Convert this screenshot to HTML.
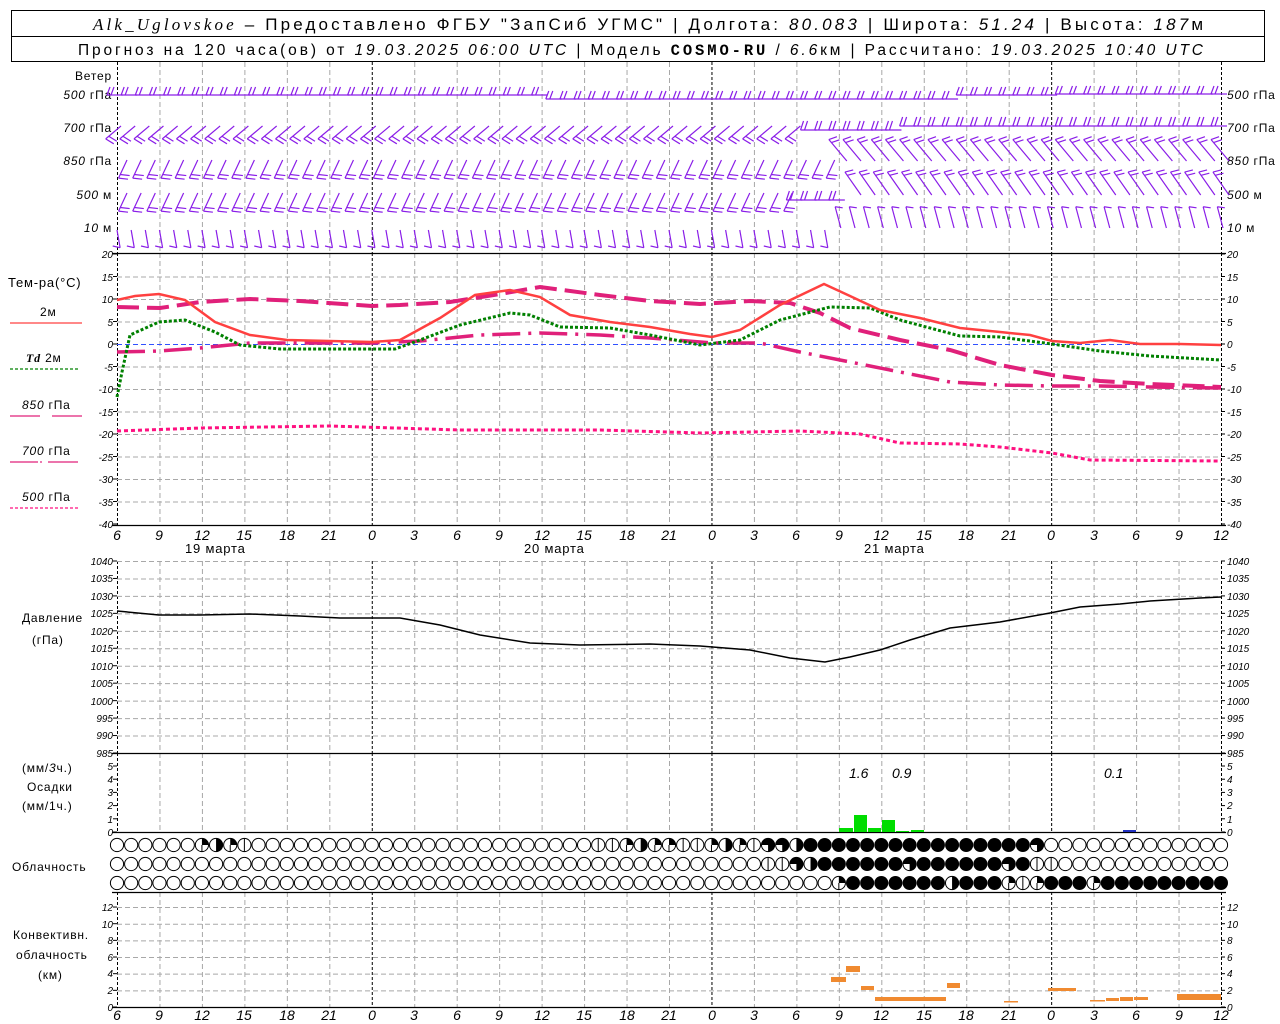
<!DOCTYPE html>
<html><head><meta charset="utf-8"><style>
html,body{margin:0;padding:0;background:#fff;width:1280px;height:1024px;overflow:hidden}
svg{display:block}
text{font-family:"Liberation Sans","DejaVu Sans",sans-serif;fill:#000}
.hd{font-size:17px}
.h2{font-size:15.5px}
.lb{font-size:12px;letter-spacing:0.8px}
.ax{font-size:10px;font-style:italic}
.bx{font-size:14px;font-style:italic}
</style></head><body>
<svg id="s" width="1280" height="1024" viewBox="0 0 1280 1024" xmlns="http://www.w3.org/2000/svg">
<rect x="11.5" y="10.5" width="1253" height="51" fill="none" stroke="#000"/>
<line x1="11" y1="36.5" x2="1265" y2="36.5" stroke="#000"/>
<text class="hd" x="93" y="30" textLength="1110" lengthAdjust="spacing"><tspan font-style="italic" font-family="Liberation Serif">Alk_Uglovskoe</tspan> – Предоставлено ФГБУ "ЗапСиб УГМС" | Долгота: <tspan font-style="italic">80.083</tspan> | Широта: <tspan font-style="italic">51.24</tspan> | Высота: <tspan font-style="italic">187</tspan>м</text>
<text class="h2" x="78" y="55" textLength="1125" lengthAdjust="spacing">Прогноз на 120 часа(ов) от <tspan font-style="italic">19.03.2025 06:00 UTC</tspan> | Модель <tspan font-weight="bold" font-family="Liberation Mono">COSMO-RU</tspan> / <tspan font-style="italic">6.6</tspan>км | Рассчитано: <tspan font-style="italic">19.03.2025 10:40 UTC</tspan></text>

<g class="lb">
<text x="112" y="80" text-anchor="end">Ветер</text>
<text x="112" y="99" text-anchor="end"><tspan font-style="italic">500</tspan> гПа</text>
<text x="112" y="132" text-anchor="end"><tspan font-style="italic">700</tspan> гПа</text>
<text x="112" y="165" text-anchor="end"><tspan font-style="italic">850</tspan> гПа</text>
<text x="112" y="199" text-anchor="end"><tspan font-style="italic">500</tspan> м</text>
<text x="112" y="232" text-anchor="end"><tspan font-style="italic">10</tspan>   м</text>
<text x="1227" y="99"><tspan font-style="italic">500</tspan> гПа</text>
<text x="1227" y="132"><tspan font-style="italic">700</tspan> гПа</text>
<text x="1227" y="165"><tspan font-style="italic">850</tspan> гПа</text>
<text x="1227" y="199"><tspan font-style="italic">500</tspan> м</text>
<text x="1227" y="232"><tspan font-style="italic">10</tspan>   м</text>
<text x="8" y="287" font-size="13">Тем-ра(°C)</text>
<text x="40" y="316">2м</text>
<text x="26" y="362"><tspan font-style="italic" font-weight="bold" font-family="Liberation Serif">Td</tspan>  2м</text>
<text x="22" y="409"><tspan font-style="italic">850</tspan> гПа</text>
<text x="22" y="455"><tspan font-style="italic">700</tspan> гПа</text>
<text x="22" y="501"><tspan font-style="italic">500</tspan> гПа</text>
<text x="22" y="622">Давление</text>
<text x="32" y="644">(гПа)</text>
<text x="22" y="772">(мм/<tspan font-style="italic">3</tspan>ч.)</text>
<text x="27" y="791">Осадки</text>
<text x="22" y="810">(мм/1ч.)</text>
<text x="12" y="871">Облачность</text>
<text x="13" y="939">Конвективн.</text>
<text x="16" y="959">облачность</text>
<text x="38" y="979">(км)</text>
<text x="185" y="553" font-size="13">19 марта</text>
<text x="524" y="553" font-size="13">20 марта</text>
<text x="864" y="553" font-size="13">21 марта</text>
</g>
<g class="bx">
<text x="849" y="778">1.6</text><text x="892" y="778">0.9</text><text x="1104" y="778">0.1</text>
</g>
<g id="g"></g>
<g class="ax" id="labels">
<text x="113" y="258" text-anchor="end">20</text><text x="113" y="281" text-anchor="end">15</text><text x="113" y="303" text-anchor="end">10</text><text x="113" y="326" text-anchor="end">5</text><text x="113" y="348" text-anchor="end">0</text><text x="113" y="371" text-anchor="end">-5</text><text x="113" y="393" text-anchor="end">-10</text><text x="113" y="416" text-anchor="end">-15</text><text x="113" y="438" text-anchor="end">-20</text><text x="113" y="461" text-anchor="end">-25</text><text x="113" y="483" text-anchor="end">-30</text><text x="113" y="506" text-anchor="end">-35</text><text x="113" y="528" text-anchor="end">-40</text>
<text x="1227" y="258">20</text><text x="1227" y="281">15</text><text x="1227" y="303">10</text><text x="1227" y="326">5</text><text x="1227" y="348">0</text><text x="1227" y="371">-5</text><text x="1227" y="393">-10</text><text x="1227" y="416">-15</text><text x="1227" y="438">-20</text><text x="1227" y="461">-25</text><text x="1227" y="483">-30</text><text x="1227" y="506">-35</text><text x="1227" y="528">-40</text>
<text x="113" y="565" text-anchor="end">1040</text><text x="113" y="582" text-anchor="end">1035</text><text x="113" y="600" text-anchor="end">1030</text><text x="113" y="617" text-anchor="end">1025</text><text x="113" y="635" text-anchor="end">1020</text><text x="113" y="652" text-anchor="end">1015</text><text x="113" y="670" text-anchor="end">1010</text><text x="113" y="687" text-anchor="end">1005</text><text x="113" y="705" text-anchor="end">1000</text><text x="113" y="722" text-anchor="end">995</text><text x="113" y="739" text-anchor="end">990</text><text x="113" y="757" text-anchor="end">985</text>
<text x="1227" y="565">1040</text><text x="1227" y="582">1035</text><text x="1227" y="600">1030</text><text x="1227" y="617">1025</text><text x="1227" y="635">1020</text><text x="1227" y="652">1015</text><text x="1227" y="670">1010</text><text x="1227" y="687">1005</text><text x="1227" y="705">1000</text><text x="1227" y="722">995</text><text x="1227" y="739">990</text><text x="1227" y="757">985</text>
<text x="113" y="770" text-anchor="end">5</text><text x="113" y="783" text-anchor="end">4</text><text x="113" y="796" text-anchor="end">3</text><text x="113" y="809" text-anchor="end">2</text><text x="113" y="823" text-anchor="end">1</text><text x="113" y="836" text-anchor="end">0</text>
<text x="1227" y="770">5</text><text x="1227" y="783">4</text><text x="1227" y="796">3</text><text x="1227" y="809">2</text><text x="1227" y="823">1</text><text x="1227" y="836">0</text>
<text x="113" y="911" text-anchor="end">12</text><text x="113" y="928" text-anchor="end">10</text><text x="113" y="944" text-anchor="end">8</text><text x="113" y="961" text-anchor="end">6</text><text x="113" y="977" text-anchor="end">4</text><text x="113" y="994" text-anchor="end">2</text><text x="113" y="1011" text-anchor="end">0</text>
<text x="1227" y="911">12</text><text x="1227" y="928">10</text><text x="1227" y="944">8</text><text x="1227" y="961">6</text><text x="1227" y="977">4</text><text x="1227" y="994">2</text><text x="1227" y="1011">0</text>
</g>
<g class="bx" text-anchor="middle">
<text x="117" y="540">6</text><text x="159" y="540">9</text><text x="202" y="540">12</text><text x="244" y="540">15</text><text x="287" y="540">18</text><text x="329" y="540">21</text><text x="372" y="540">0</text><text x="414" y="540">3</text><text x="457" y="540">6</text><text x="499" y="540">9</text><text x="542" y="540">12</text><text x="584" y="540">15</text><text x="627" y="540">18</text><text x="669" y="540">21</text><text x="712" y="540">0</text><text x="754" y="540">3</text><text x="796" y="540">6</text><text x="839" y="540">9</text><text x="881" y="540">12</text><text x="924" y="540">15</text><text x="966" y="540">18</text><text x="1009" y="540">21</text><text x="1051" y="540">0</text><text x="1094" y="540">3</text><text x="1136" y="540">6</text><text x="1179" y="540">9</text><text x="1221" y="540">12</text>
<text x="117" y="1020">6</text><text x="159" y="1020">9</text><text x="202" y="1020">12</text><text x="244" y="1020">15</text><text x="287" y="1020">18</text><text x="329" y="1020">21</text><text x="372" y="1020">0</text><text x="414" y="1020">3</text><text x="457" y="1020">6</text><text x="499" y="1020">9</text><text x="542" y="1020">12</text><text x="584" y="1020">15</text><text x="627" y="1020">18</text><text x="669" y="1020">21</text><text x="712" y="1020">0</text><text x="754" y="1020">3</text><text x="796" y="1020">6</text><text x="839" y="1020">9</text><text x="881" y="1020">12</text><text x="924" y="1020">15</text><text x="966" y="1020">18</text><text x="1009" y="1020">21</text><text x="1051" y="1020">0</text><text x="1094" y="1020">3</text><text x="1136" y="1020">6</text><text x="1179" y="1020">9</text><text x="1221" y="1020">12</text>
</g>
</svg>
<script>
var G=document.getElementById('g'),NS='http://www.w3.org/2000/svg';
function el(t,a){var e=document.createElementNS(NS,t);for(var k in a)e.setAttribute(k,a[k]);G.appendChild(e);return e;}
function ln(x1,y1,x2,y2,c,w,d){var a={x1:x1,y1:y1,x2:x2,y2:y2,stroke:c,'stroke-width':w||1};if(d)a['stroke-dasharray']=d;return el('line',a);}
var X=function(h){return 117+h*1104/78;};
var segs=[[62,253],[253,525],[561,753],[753,832],[892,1007]];
for(var k=0;k<=26;k++){var x=117+k*1104/26+0.5;var blk=(k==0||k==26||k==6||k==14||k==22);
 segs.forEach(function(s){ln(x,s[0],x,s[1],blk?'#000':'#a8a8a8',1,blk?'3,2':'5,3');});}
for(var v=15;v>=-35;v-=5){var y=344-4.5*v+0.5;ln(117,y,1221,y,v==0?'#3050ff':'#a8a8a8',1,'5,3');}
for(var p=1040;p>=990;p-=5){var y=561+(1040-p)*3.4909+0.5;ln(117,y,1221,y,'#a8a8a8',1,'5,3');}
for(var c=2;c<=12;c+=2){var y=1007-c*8.33+0.5;ln(117,y,1221,y,'#a8a8a8',1,'5,3');}
[253,525,753,832,892,1007].forEach(function(y){ln(112,y+0.5,1226,y+0.5,'#000',1.2);});
function ticks(ys){ys.forEach(function(y){ln(113,y,117,y,'#000',1);ln(1221,y,1225,y,'#000',1);});}
var t=[];for(var v=20;v>=-40;v-=5)t.push(344-4.5*v);for(var p=1040;p>=985;p-=5)t.push(561+(1040-p)*3.4909);
for(var i=0;i<=5;i++)t.push(832-i*13.2);for(var c=0;c<=12;c+=2)t.push(1007-c*8.33);ticks(t);
ln(10,323,82,323,'#ff4040',1.2);ln(10,369,78,369,'#008000',1.2,'3,2');
ln(10,416,40,416,'#e0207a',1.2);ln(52,416,82,416,'#e0207a',1.2);
ln(10,462,38,462,'#e0207a',1.2);ln(40,462,42,462,'#e0207a',1.2);ln(48,462,78,462,'#e0207a',1.2);
ln(10,508,78,508,'#ff1080',1.2,'3,2');
function pl(pts,c,w,d){var a={points:pts.map(function(p){return p.join(',')}).join(' '),fill:'none',stroke:c,'stroke-width':w};if(d)a['stroke-dasharray']=d;return el('polyline',a);}
pl([[117,307],[160,308],[200,302],[250,299],[300,301],[372,306],[400,305],[450,302],[500,294],[540,287],[600,295],[650,301],[700,304],[750,301],[790,303],[820,313],[850,328],[900,340],[950,350],[1000,365],[1052,375],[1100,381],[1150,384],[1221,387]],'#e0207a',4,'22,8');
pl([[117,352],[159,351],[200,348],[250,343],[300,343],[372,343],[420,341],[480,335],[540,333],[600,335],[650,338],[712,343],[760,343],[800,352],[850,362],[900,372],[950,382],[1000,385],[1052,386],[1100,386],[1150,387],[1221,388]],'#e0207a',3.5,'28,8,3,8');
pl([[117,431],[200,428],[330,426],[460,430],[600,430],[700,433],[800,431],[860,434],[900,443],[960,444],[1000,447],[1052,453],[1090,460],[1221,461]],'#ff1080',3,'4,3');
pl([[117,397],[122,372],[130,335],[159,322],[185,320],[215,332],[240,345],[280,349],[330,349],[395,349],[420,340],[460,325],[510,313],[530,315],[560,327],[610,328],[650,335],[700,345],[740,340],[780,320],[830,307],[870,308],[900,320],[960,336],[1000,337],[1052,344],[1100,351],[1150,356],[1221,360]],'#008000',3,'3,2');
pl([[117,300],[135,296],[159,294],[185,300],[215,322],[250,335],[287,340],[330,341],[372,342],[400,340],[440,318],[475,295],[510,290],[540,297],[570,315],[610,322],[650,327],[690,334],[712,337],[740,330],[780,305],[824,284],[850,296],[880,310],[920,318],[960,328],[1000,332],[1030,335],[1052,341],[1080,343],[1110,340],[1140,344],[1180,344],[1221,345]],'#ff4040',2.5);
pl([[117,611],[159,615],[200,615],[250,614],[300,616],[340,618],[400,618],[440,625],[480,635],[530,643],[580,645],[650,644],[700,646],[750,650],[790,658],[825,662],[850,657],[880,650],[910,640],[950,628],[1000,622],[1050,613],[1080,607],[1120,604],[1150,601],[1200,598],[1221,597]],'#000',1.5);
[[839,853,828],[854,867,815],[868,881,828],[882,895,820],[896,909,831],[911,924,830]].forEach(function(b){el('rect',{x:b[0],y:b[2],width:b[1]-b[0],height:832-b[2],fill:'#00dd00'});});
el('rect',{x:1123,y:830,width:13,height:2,fill:'#2030c0'});
[[831,846,977,982],[846,860,966,972],[861,874,986,990],[875,946,997,1001],[947,960,983,988],[1004,1018,1001,1002.5],[1048,1076,988,991],[1090,1105,1000,1001.5],[1106,1119,998,1001],[1120,1133,997,1001],[1134,1148,997,1000],[1177,1221,994,1000]].forEach(function(b){el('rect',{x:b[0],y:b[2],width:b[1]-b[0],height:b[3]-b[2],fill:'#f08a30'});});
function z(n,v){var a=[];for(var i=0;i<n;i++)a.push(v);return a;}
var r1=z(79,0),r2=z(79,0),r3=z(79,0);
function set(r,o){for(var k in o)r[+k]=o[k];}
set(r1,{6:2,7:3,8:2,9:1,34:1,35:1,36:2,37:3,38:2,39:2,40:1,41:1,42:2,43:3,44:2,45:1,46:4,47:4,48:3,65:4});for(var i=49;i<=64;i++)r1[i]=5;
set(r2,{46:1,47:1,48:4,49:3,63:4,65:1,66:1});for(var i=50;i<=62;i++)r2[i]=5;r2[56]=4;r2[64]=5;
for(var i=52;i<=78;i++)r3[i]=5;set(r3,{51:2,59:3,63:2,64:1,65:2,69:2});
function cloud(cx,cy,s){var r=6.6;
 if(s==5){el('circle',{cx:cx,cy:cy,r:r+0.4,fill:'#000'});return;}
 el('circle',{cx:cx,cy:cy,r:r,fill:'#fff',stroke:'#000','stroke-width':1});
 if(s==1)ln(cx,cy-r,cx,cy+r,'#000',1);
 if(s==2){el('path',{d:'M'+cx+','+cy+'V'+(cy-r)+'A'+r+','+r+' 0 0 1 '+(cx+r)+','+cy+'Z',fill:'#000'});ln(cx,cy,cx,cy+r,'#000',1);}
 if(s==3)el('path',{d:'M'+cx+','+(cy-r)+'A'+r+','+r+' 0 0 1 '+cx+','+(cy+r)+'Z',fill:'#000'});
 if(s==4)el('path',{d:'M'+cx+','+cy+'H'+(cx-r)+'A'+r+','+r+' 0 1 1 '+cx+','+(cy+r)+'Z',fill:'#000'});
}
for(var i=0;i<79;i++){cloud(X(i),845,r1[i]);cloud(X(i),864,r2[i]);cloud(X(i),883,r3[i]);}
var PU='#8a1ee8';
function barb(bx,by,ang,L,n,side,tl){var a=ang*Math.PI/180,ux=Math.cos(a),uy=Math.sin(a);
 var ex=bx+ux*L,ey=by+uy*L;ln(bx,by,ex,ey,PU,1.2);
 var px=-uy*side,py=ux*side;
 for(var j=0;j<n;j++){var sx=ex-ux*j*4,sy=ey-uy*j*4;ln(sx,sy,sx+px*tl-ux*3,sy+py*tl-uy*3,PU,1.2);}
}
for(var h=0;h<=78;h++){var x=X(h);
 var y5=95+(h>30&&h<60?4:0)-(h>66?1:0);
 barb(x+6,y5,180,16,2,1,8);
 if(h<=48)barb(x+4,126,140,20,2,-1,9);else barb(x+6,h<56?130:126,180,16,2,1,9);
 if(h<=50)barb(x+10,160,115,20,2,-1,9);else barb(x+8,161,-130,28,2,1,8);
 if(h<=47)barb(x+10,193,115,20,2,-1,9);else if(h<=51)barb(x+6,200,180,16,2,1,9);else barb(x+8,195,-125,28,2,1,8);
 if(h<=50)barb(x,230,80,18,1,1,7);else barb(x+2,228,-105,22,1,1,7);
}
</script>
</body></html>
